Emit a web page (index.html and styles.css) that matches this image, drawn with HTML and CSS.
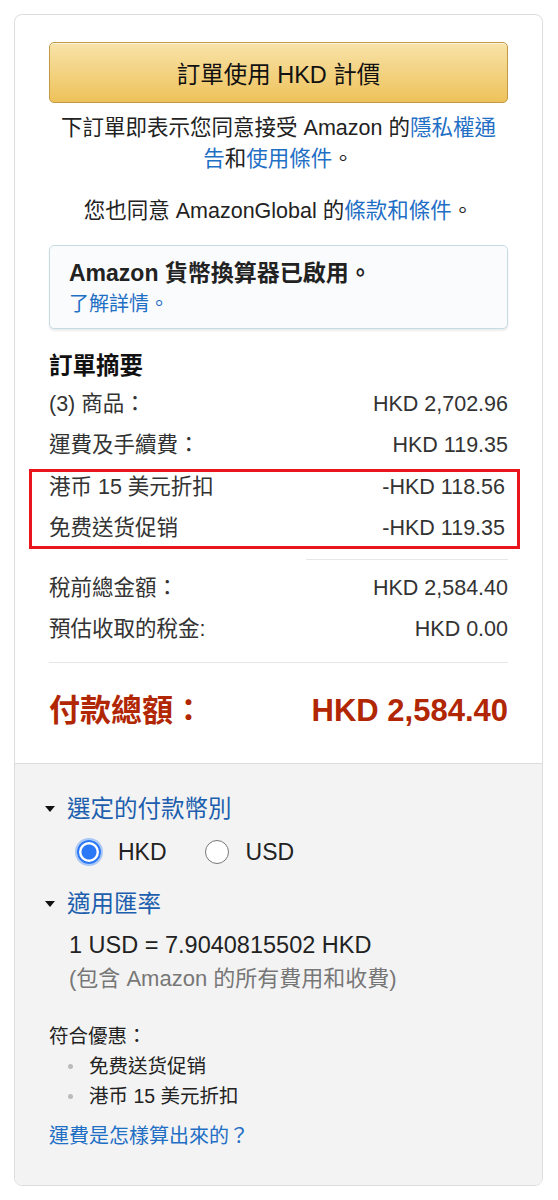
FILE: index.html
```html
<!DOCTYPE html>
<html lang="zh-Hant">
  <head>
    <meta charset="UTF-8" />
    <meta name="viewport" content="width=device-width, initial-scale=1.0" />
    <title>訂單摘要</title>
    <link rel="stylesheet" href="styles.css">
  </head>
  <body>
    <div class="card">
      <div class="card-top">
        <button class="place-order">訂單使用 HKD 計價</button>
        <p class="legal">下訂單即表示您同意接受 Amazon 的<a href="#">隱私權通告</a>和<a href="#">使用條件</a>。</p>
        <p class="legal agree">您也同意 AmazonGlobal 的<a href="#">條款和條件</a>。</p>

        <div class="converter">
          <div class="converter-title">Amazon 貨幣換算器已啟用。</div>
          <a href="#">了解詳情。</a>
        </div>

        <h3 class="summary-title">訂單摘要</h3>
        <div class="row"><span>(3) 商品：</span><span>HKD 2,702.96</span></div>
        <div class="row"><span>運費及手續費：</span><span>HKD 119.35</span></div>
        <div class="highlight">
          <div class="row"><span>港币 15 美元折扣</span><span>-HKD 118.56</span></div>
          <div class="row"><span>免费送货促销</span><span>-HKD 119.35</span></div>
        </div>
        <hr class="short-rule" />
        <div class="row"><span>稅前總金額：</span><span>HKD 2,584.40</span></div>
        <div class="row"><span>預估收取的稅金:</span><span>HKD 0.00</span></div>
        <hr class="rule" />
        <div class="row total"><span>付款總額：</span><span>HKD 2,584.40</span></div>
      </div>

      <div class="card-bottom">
        <div class="toggle"><span class="caret"></span><a href="#">選定的付款幣別</a></div>
        <div class="currencies">
          <label class="radio"><span class="dot checked"></span>HKD</label>
          <label class="radio"><span class="dot"></span>USD</label>
        </div>
        <div class="toggle"><span class="caret"></span><a href="#">適用匯率</a></div>
        <div class="rate">1 USD = 7.9040815502 HKD</div>
        <div class="rate-note">(包含 Amazon 的所有費用和收費)</div>

        <div class="offers">
          <div>符合優惠：</div>
          <ul>
            <li>免费送货促销</li>
            <li>港币 15 美元折扣</li>
          </ul>
        </div>
        <a class="shipping-link" href="#">運費是怎樣算出來的？</a>
      </div>
    </div>
  </body>
</html>
```

FILE: styles.css
```css
body {
  margin: 0;
  padding: 14px 15px 12px 14px;
  background: #fff;
  color: #111;
  font-family: "Liberation Sans", "Noto Sans CJK TC", sans-serif;
  font-size: 21.5px;
}

a {
  color: #1f6fc5;
  text-decoration: none;
}

.card {
  border: 1px solid #ddd;
  border-radius: 8px;
  overflow: hidden;
}

.card-top {
  padding: 27px 34px 30px 34px;
}

.place-order {
  display: block;
  width: 100%;
  height: 61px;
  border: 1px solid #c39a44;
  border-radius: 5px;
  background: linear-gradient(#f8e3a9, #eec25a);
  box-shadow: 0 1px 0 rgba(255, 255, 255, 0.6) inset;
  color: #111;
  font-family: inherit;
  font-size: 23.5px;
}

.legal {
  margin: 10px 4px 0 4px;
  text-align: center;
  line-height: 31px;
  color: #222;
}

.agree {
  margin-top: 21px;
}

.converter {
  margin-top: 18px;
  padding: 12px 19px 8px 19px;
  border: 1px solid #c6dbe2;
  border-radius: 5px;
  background: #fafbfc;
  box-shadow: 0 2px 2px rgba(0, 0, 0, 0.08);
  line-height: 31px;
  font-size: 20px;
}

.converter-title {
  font-size: 23px;
  font-weight: bold;
  color: #222;
}

.summary-title {
  margin: 21px 0 2px 0;
  font-size: 23.5px;
  font-weight: bold;
  line-height: 32px;
}

.row {
  display: flex;
  justify-content: space-between;
  line-height: 41px;
  color: #333;
}

.highlight {
  display: flex;
  flex-direction: column;
  gap: 11px;
  margin: 3px -12px 0 -20px;
  padding: 0 12px 3px 17px;
  border: 3px solid #e8151d;
}

.highlight .row {
  line-height: 30px;
}

.short-rule {
  margin: 10px 0 8px 257px;
  border: 0;
  border-top: 1px solid #e7e7e7;
}

.rule {
  margin: 12px 0 0 0;
  border: 0;
  border-top: 1px solid #e7e7e7;
}

.total {
  margin-top: 26px;
  color: #b12704;
  font-size: 31px;
  font-weight: bold;
  line-height: 44px;
}

.card-bottom {
  padding: 29px 34px 34px 34px;
  border-top: 1px solid #ddd;
  background: #f3f3f3;
}

.toggle {
  display: flex;
  align-items: center;
  line-height: 32px;
  font-size: 23.5px;
}

.toggle a {
  color: #1d5fae;
}

.caret {
  width: 0;
  height: 0;
  margin: 0 12px 0 -4px;
  border-left: 5.5px solid transparent;
  border-right: 5.5px solid transparent;
  border-top: 6px solid #111;
}

.currencies {
  display: flex;
  gap: 38px;
  margin: 11px 0 20px 28px;
}

.radio {
  display: flex;
  align-items: center;
  gap: 17px;
  font-size: 23px;
  line-height: 32px;
  color: #222;
}

.dot {
  width: 24px;
  height: 24px;
  border: 1px solid #777;
  border-radius: 50%;
  background: #fff;
  box-sizing: border-box;
}

.dot.checked {
  border: 2px solid #2b78f6;
  background: radial-gradient(circle, #2b78f6 0 7px, #fff 8px);
  box-shadow: 0 0 0 2px #a9c8f5;
}

.rate {
  margin: 8px 0 0 20px;
  font-size: 23.5px;
  line-height: 34px;
  color: #222;
}

.rate-note {
  margin-left: 20px;
  font-size: 22px;
  color: #777;
  line-height: 34px;
}

.offers {
  margin-top: 25px;
  font-size: 19.5px;
  line-height: 30px;
  color: #222;
}

.offers ul {
  margin: 0;
  padding: 0 0 0 40px;
  list-style: none;
}

.offers li {
  position: relative;
}

.offers li::before {
  content: "";
  position: absolute;
  left: -21px;
  top: 13px;
  width: 5px;
  height: 5px;
  border-radius: 50%;
  background: #bbb;
}

.shipping-link {
  display: block;
  margin-top: 10px;
  font-size: 20px;
  line-height: 30px;
}
```
